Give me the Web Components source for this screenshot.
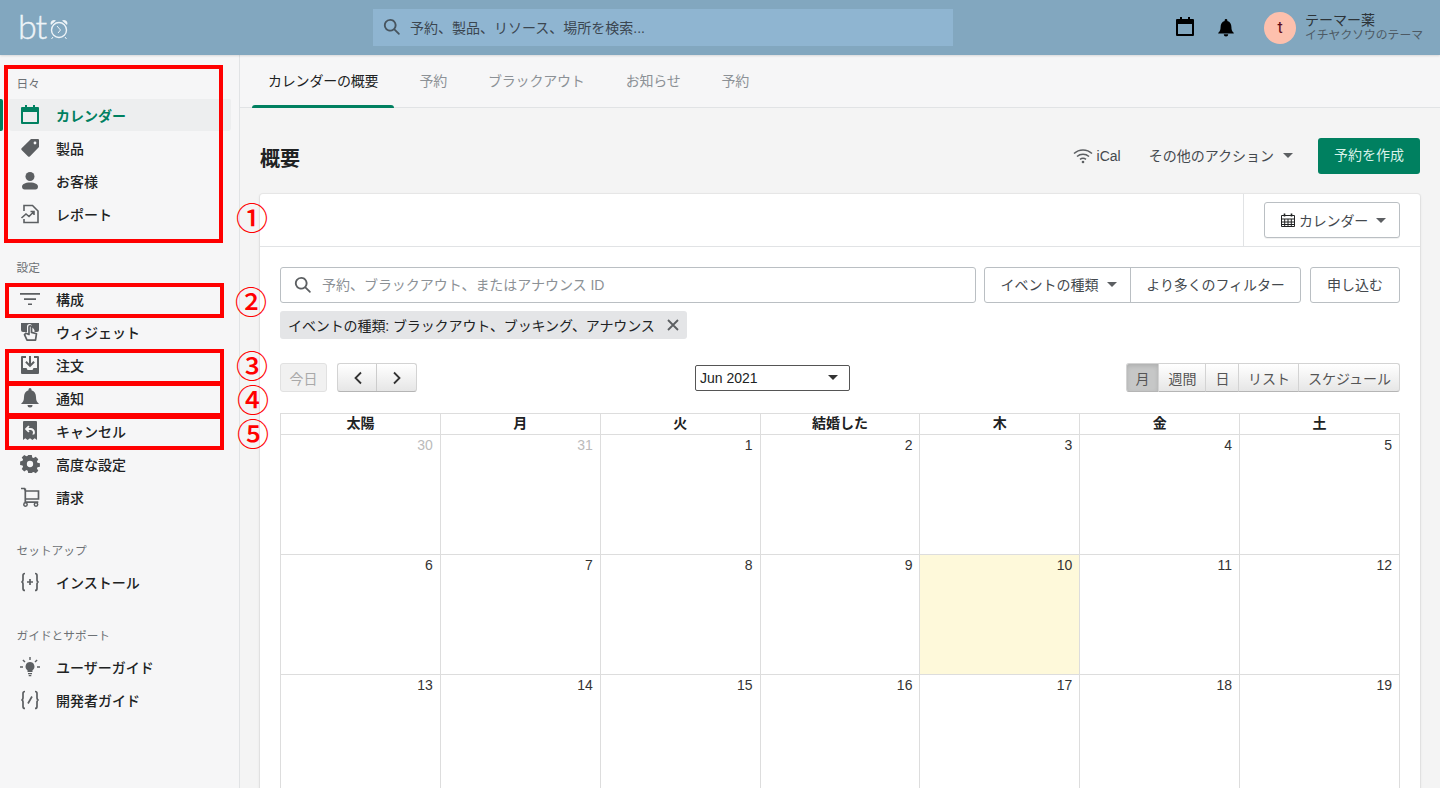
<!DOCTYPE html>
<html lang="ja">
<head>
<meta charset="utf-8">
<title>bto</title>
<style>
  html, body { margin: 0; height: 788px; overflow: hidden; background: #f4f4f4; }
  body { font: 14px "Liberation Sans", "Noto Sans CJK JP", sans-serif; color: #202223; }
</style>
</head>
<body>
<bt-app></bt-app>

<script>
const icons = {
  calendar: '<path fill-rule="evenodd" d="M5 0h2v2h6V0h2v2h3a1 1 0 0 1 1 1v15a1 1 0 0 1-1 1H2a1 1 0 0 1-1-1V3a1 1 0 0 1 1-1h3V0zM3 7v10h14V7H3z"/>',
  tag: '<path fill-rule="evenodd" d="M11 1h7a1 1 0 0 1 1 1v7L9.8 18.4a1.2 1.2 0 0 1-1.7 0L1.6 11.9a1.2 1.2 0 0 1 0-1.7L11 1zm4 2.6a1.4 1.4 0 1 0 0 2.8 1.4 1.4 0 0 0 0-2.8z"/>',
  customer: '<circle cx="10" cy="5.5" r="4.5"/><path d="M10 11.5c-5 0-8 1.7-8 4.3 0 1.6 1 2.7 2.6 2.7h10.8c1.6 0 2.6-1.1 2.6-2.7 0-2.6-3-4.3-8-4.3z"/>',
  report: '<path fill="none" stroke="currentColor" stroke-width="1.6" d="M4 7V1.500h8.500L18 7v11.500H4V15"/><path fill="none" stroke="currentColor" stroke-width="1.6" d="M1.500 14L6 10l3 2.500 4.500-4.500M10.500 7.500h3.500V11"/>',
  filter: '<path d="M0 4h20v1.700H0zM4 9.200h12v1.700H4zM8 14.400h4v1.700H8z"/>',
  widget: '<path d="M1 1h18v7a2 2 0 0 1-2 2h-2.500V8.500a4 4 0 0 0-2.500-3V4.500A2.500 2.500 0 0 0 7 4.500V10H3a2 2 0 0 1-2-2V1z"/><path fill="none" stroke="currentColor" stroke-width="1.700" stroke-linejoin="round" d="M9 5v7.500l-3-1.300-1.500 1.500 2.500 5.500h8.500l1-6.500-5-1.300V5a1.250 1.250 0 0 0-2.500 0z"/>',
  order: '<path fill-rule="evenodd" d="M1 2a1 1 0 0 1 1-1h4v2H3v10h3.500l1 2h5l1-2H17V3h-3V1h4a1 1 0 0 1 1 1v16a1 1 0 0 1-1 1H2a1 1 0 0 1-1-1V2z"/><path d="M9 1h2v7.500l2.400-2.400 1.400 1.400L10 12.300 5.200 7.500l1.400-1.400L9 8.500z"/>',
  bell: '<path d="M10 0a1.500 1.500 0 0 1 1.500 1.500v.7C14.600 3 16 5.700 16 9c0 3.500.9 5 2.500 6.200.4.300.2.800-.3.800H1.800c-.5 0-.7-.5-.3-.8C3.100 14 4 12.500 4 9c0-3.300 1.400-6 4.500-6.800v-.7A1.500 1.500 0 0 1 10 0z"/><path d="M7.500 17h5a2.500 2.500 0 0 1-5 0z"/>',
  cancel: '<path fill-rule="evenodd" d="M4 0h12a1 1 0 0 1 1 1v18l-2.300-1.700L12.400 19 10 17.300 7.600 19l-2.300-1.700L3 19V1a1 1 0 0 1 1-1zm4.300 4.500L4.800 8l3.500 3.500 1.300-1.300-1.300-1.300h2.200c1.500 0 2.500 1 2.500 2.300 0 .8-.300 1.500-.8 2.300h2c.5-.8.700-1.500.7-2.300 0-2.300-1.900-4.200-4.400-4.200H8.300l1.300-1.200-1.300-1.300z"/>',
  gear: '<path fill-rule="evenodd" d="M8 0h4l.5 2.700 1.500.7 2.400-1.500 2.800 2.800-1.500 2.400.6 1.400 2.700.6v4l-2.700.6-.6 1.400 1.500 2.400-2.800 2.800-2.400-1.500-1.500.6L12 20H8l-.5-2.600-1.500-.6-2.400 1.500L.8 15.500l1.500-2.400-.6-1.400L-1 11.100v-4l2.700-.6.600-1.400L.8 2.700l2.800-2.800L6 1.400l1.500-.7L8 0zm2 6.500a3.500 3.500 0 1 0 0 7 3.500 3.500 0 0 0 0-7z" transform="translate(1 1) scale(.9)"/>',
  cart: '<path fill="none" stroke="currentColor" stroke-width="1.700" d="M1 1.500h3.500l.8 2.500M5.300 4H18.500v8H5.300V1.500M5.300 12v3.200h13"/><circle cx="5.500" cy="17.500" r="1.700" fill="none" stroke="currentColor" stroke-width="1.500"/><circle cx="16" cy="17.500" r="1.700" fill="none" stroke="currentColor" stroke-width="1.500"/>',
  install: '<path fill="none" stroke="currentColor" stroke-width="1.700" d="M5 1.500C3.500 1.500 3 2.200 3 3.500v4.300C3 9.200 2.500 10 1.300 10 2.500 10 3 10.800 3 12.200v4.300c0 1.300.5 2 2 2M15 1.500c1.500 0 2 .7 2 2v4.300c0 1.400.5 2.200 1.700 2.200-1.200 0-1.700.8-1.700 2.200v4.300c0 1.300-.5 2-2 2M7 10h6M10 7v6"/>',
  bulb: '<path d="M10 5a4.500 4.500 0 0 1 2.500 8.200V15h-5v-1.800A4.500 4.500 0 0 1 10 5zM8 16h4v1.300H8zM8.700 18h2.600v1.300H8.700zM9.300 0h1.400v3H9.300zM0 9.300h3v1.400H0zM17 9.300h3v1.400h-3zM3.400 2.400l2.100 2.100-1 1-2.100-2.100zM16.600 2.400l1 1-2.100 2.100-1-1z"/>',
  dev: '<path fill="none" stroke="currentColor" stroke-width="1.700" d="M5 1.500C3.500 1.500 3 2.200 3 3.500v4.300C3 9.200 2.500 10 1.300 10 2.500 10 3 10.800 3 12.200v4.300c0 1.300.5 2 2 2M15 1.500c1.500 0 2 .7 2 2v4.300c0 1.400.5 2.200 1.700 2.200-1.200 0-1.700.8-1.700 2.200v4.300c0 1.300-.5 2-2 2M8 13.500l4-7"/>',
  search: '<path fill-rule="evenodd" d="M8 1a7 7 0 0 1 5.600 11.200l4.800 4.800a1 1 0 0 1-1.400 1.400l-4.800-4.800A7 7 0 1 1 8 1zm0 2a5 5 0 1 0 0 10A5 5 0 0 0 8 3z"/>'
};

function svg(name, size = 20) {
  return `<svg width="${size}" height="${size}" viewBox="0 0 20 20" fill="currentColor" aria-hidden="true">${icons[name]}</svg>`;
}

class BtNavItem extends HTMLElement {
  connectedCallback() {
    const root = this.attachShadow({ mode: 'open' });
    root.innerHTML = `
      <style>
        :host { display: block; height: 33px; position: relative; }
        .row { height: 33px; margin: 0 8px 0 9px; border-radius: 3px; display: flex; align-items: center;
               padding-left: 11px; font-weight: 500; font-size: 14px; color: #202223; }
        .ico { width: 20px; height: 20px; display: flex; align-items: center; justify-content: center; color: #5c5f62; margin-right: 16px; }
        .ico svg { width: 20px; height: 20px; overflow: visible; }
        :host([active]) .row { background: linear-gradient(transparent 1px, #edeeef 1px); color: #008060; font-weight: 700; }
        :host([active]) .ico { color: #008060; }
        :host([active])::before { content: ""; position: absolute; left: 0; top: 1px; width: 3px; height: 32px; background: #008060; border-radius: 0 2px 2px 0; }
      </style>
      <div class="row"><span class="ico">${svg(this.getAttribute('icon'))}</span><slot></slot></div>`;
  }
}

class BtNavSection extends HTMLElement {
  connectedCallback() {
    const root = this.attachShadow({ mode: 'open' });
    root.innerHTML = `
      <style>
        :host { display: block; margin-bottom: 19px; }
        .label { height: 33px; line-height: 37px; padding-left: 16.500px; font-size: 11.700px; color: #6d7175; }
      </style>
      <div class="label">${this.getAttribute('label')}</div>
      <slot></slot>`;
  }
}

class BtSidebar extends HTMLElement {
  constructor() {
    super();
    const root = this.attachShadow({ mode: 'open' });
    root.innerHTML = `
      <style>
        :host { display: block; width: 239px; border-right: 1px solid #e1e3e5; background: #f6f6f7; padding-top: 10px; box-sizing: content-box; }
      </style>
      <bt-nav-section label="日々">
        <bt-nav-item icon="calendar" active>カレンダー</bt-nav-item>
        <bt-nav-item icon="tag">製品</bt-nav-item>
        <bt-nav-item icon="customer">お客様</bt-nav-item>
        <bt-nav-item icon="report">レポート</bt-nav-item>
      </bt-nav-section>
      <bt-nav-section label="設定">
        <bt-nav-item icon="filter">構成</bt-nav-item>
        <bt-nav-item icon="widget">ウィジェット</bt-nav-item>
        <bt-nav-item icon="order">注文</bt-nav-item>
        <bt-nav-item icon="bell">通知</bt-nav-item>
        <bt-nav-item icon="cancel">キャンセル</bt-nav-item>
        <bt-nav-item icon="gear">高度な設定</bt-nav-item>
        <bt-nav-item icon="cart">請求</bt-nav-item>
      </bt-nav-section>
      <bt-nav-section label="セットアップ">
        <bt-nav-item icon="install">インストール</bt-nav-item>
      </bt-nav-section>
      <bt-nav-section label="ガイドとサポート">
        <bt-nav-item icon="bulb">ユーザーガイド</bt-nav-item>
        <bt-nav-item icon="dev">開発者ガイド</bt-nav-item>
      </bt-nav-section>`;
  }
}

class BtTopbar extends HTMLElement {
  constructor() {
    super();
    const root = this.attachShadow({ mode: 'open' });
    root.innerHTML = `
      <style>
        :host { display: flex; align-items: center; height: 55px; background: #82a7bf; position: relative; z-index: 2;
                box-shadow: 0 1px 2px rgba(0,0,0,.12); }
        .logo { width: 373px; display: flex; align-items: center; padding-left: 18px; box-sizing: border-box; color: #eef4f8; }
        .logo span { font: 300 34px/38px Lato, sans-serif; letter-spacing: -1px; margin-top: -3px; -webkit-text-stroke: .4px #eef4f8; }
        .logo svg { margin-left: 4px; margin-top: 2px; }
        .search { width: 580px; height: 37px; background: #8fb5d1; display: flex; align-items: center; padding: 0 0 2px 10px; box-sizing: border-box; color: #3b4650; font-size: 14px; }
        .search svg { width: 18px; height: 18px; margin-right: 9px; color: #47545e; }
        .tools { margin-left: 222px; display: flex; align-items: center; }
        .tools svg { display: block; color: #000; }
        .bell { margin-left: 22px; }
        .avatar { width: 32px; height: 32px; border-radius: 50%; background: #fdc0ad; color: #5c0c1c; margin-left: 29px; display: flex; align-items: center; justify-content: center; font: 16px Roboto, sans-serif; }
        .who { margin-left: 9px; white-space: nowrap; margin-top: -1px; }
        .who div { font-size: 14px; line-height: 16px; color: #2c3338; }
        .who small { display: block; font-size: 11.800px; line-height: 14px; color: #4d5a64; }
      </style>
      <div class="logo"><span>bt</span>
        <svg width="18" height="22" viewBox="0 0 18 22" fill="none" stroke="currentColor" stroke-width="1.400">
          <circle cx="9" cy="12" r="7.500"/><path d="M7 8l3.500 4-2.500 3M3 19l-1.500 2M15 19l1.500 2" stroke-width="1"/>
          <path d="M1 7a3.500 3.500 0 0 1 5-4.500zM17 7a3.500 3.500 0 0 0-5-4.500z" fill="currentColor" stroke="none"/>
        </svg>
      </div>
      <div class="search">${svg('search')}<span>予約、製品、リソース、場所を検索...</span></div>
      <div class="tools">
        <svg width="20" height="21" viewBox="0 0 20 21" fill="currentColor">${icons.calendar}</svg>
        <svg class="bell" width="18" height="20" viewBox="0 0 20 20" fill="currentColor">${icons.bell}</svg>
        <div class="avatar">t</div>
        <div class="who"><div>テーマー薬</div><small>イチヤクソウのテーマ</small></div>
      </div>`;
  }
}

class BtTabs extends HTMLElement {
  constructor() {
    super();
    const root = this.attachShadow({ mode: 'open' });
    const tabs = ['カレンダーの概要', '予約', 'ブラックアウト', 'お知らせ', '予約'];
    root.innerHTML = `
      <style>
        :host { display: flex; height: 52px; padding-left: 12px; background: #f6f6f7; border-bottom: 1px solid #e1e3e5; gap: 9px; box-sizing: content-box; }
        a { padding: 0 16px; line-height: 53px; height: 52px; color: #8c9196; font-size: 14px; letter-spacing: -.2px; box-sizing: border-box; position: relative; }
        a:first-of-type { color: #202223; }
        a:first-of-type::after { content: ""; position: absolute; left: 0; right: 0; bottom: -1px; height: 3px; background: #008060; border-radius: 3px 3px 0 0; }
      </style>
      ${tabs.map(t => `<a>${t}</a>`).join('')}`;
  }
}

class BtPageHead extends HTMLElement {
  constructor() {
    super();
    const root = this.attachShadow({ mode: 'open' });
    root.innerHTML = `
      <style>
        :host { display: flex; align-items: center; height: 36px; margin: 30px 20px 20px; color: #44494e; font-size: 14px; }
        h1 { margin: 2px auto 0 0; font-size: 20px; font-weight: 600; color: #202223; }
        .ical { display: flex; align-items: center; gap: 4px; margin-right: 28px; }
        .more { display: flex; align-items: center; margin-right: 25px; padding-bottom: 2px; }
        .caret { width: 0; height: 0; border: 5px solid transparent; border-top-color: #5c5f62; border-bottom: 0; margin-left: 9px; }
        .create { width: 102px; height: 36px; line-height: 35px; background: #008060; color: #d9f2ea; text-align: center; border-radius: 3px; }
      </style>
      <h1>概要</h1>
      <div class="ical">
        <svg width="20" height="16" viewBox="0 0 20 16" fill="none" stroke="#5c5f62" stroke-width="1.500">
          <path d="M1 5.500a13 13 0 0 1 18 0M4 8.500a9 9 0 0 1 12 0M7 11.300a5 5 0 0 1 6 0"/><circle cx="10" cy="14" r="1.300" fill="#5c5f62" stroke="none"/>
        </svg>
        <span>iCal</span>
      </div>
      <div class="more">その他のアクション<i class="caret"></i></div>
      <div class="create">予約を作成</div>`;
  }
}

class BtCardHead extends HTMLElement {
  constructor() {
    super();
    const root = this.attachShadow({ mode: 'open' });
    root.innerHTML = `
      <style>
        :host { display: flex; justify-content: flex-end; height: 52px; border-bottom: 1px solid #e1e3e5; }
        .side { width: 177px; border-left: 1px solid #e1e3e5; box-sizing: border-box; padding: 8px 20px 0 20px; }
        .btn { height: 36px; width: 136px; box-sizing: border-box; background: #fff; border: 1px solid #babfc3; border-radius: 3px; display: flex; align-items: center; padding-left: 16px; color: #44494e; font-size: 14px; box-shadow: 0 1px 0 rgba(0,0,0,.05); }
        .caret { width: 0; height: 0; border: 5px solid transparent; border-top-color: #5c5f62; border-bottom: 0; margin-left: 8px; }
        svg { margin-right: 4px; }
      </style>
      <div class="side"><div class="btn">
        <svg width="14" height="14" viewBox="0 0 14 14" fill="none" stroke="#202223" stroke-width="1">
          <path d="M.5 2.500h13v11H.5zM.5 6h13M.5 9h13M.5 11.500h13M3.700 6v7.500M7 6v7.500M10.300 6v7.500"/><path d="M3.500 .5v3M10.500 .5v3" stroke-width="1.600"/>
        </svg><span style="letter-spacing:-.2px">カレンダー</span><i class="caret"></i></div></div>`;
  }
}

class BtFilters extends HTMLElement {
  constructor() {
    super();
    const root = this.attachShadow({ mode: 'open' });
    root.innerHTML = `
      <style>
        :host { display: block; padding: 20px 20px 0; color: #44494e; font-size: 14px; }
        .row { display: flex; height: 36px; }
        .box { border: 1px solid #babfc3; border-radius: 3px; background: #fff; box-sizing: border-box; display: flex; align-items: center; justify-content: center; }
        .input { width: 696px; justify-content: flex-start; padding: 0 0 2px 13px; color: #8c9196; letter-spacing: -.03px; }
        .input svg { width: 18px; height: 18px; color: #5c5f62; margin-right: 10px; margin-top: 2px; }
        .group { width: 317px; margin-left: 8px; }
        .group span { display: flex; align-items: center; justify-content: center; height: 100%; padding-bottom: 2px; box-sizing: border-box; }
        .group span:first-child { width: 146px; padding-left: 2px; border-right: 1px solid #babfc3; }
        .group span:last-child { flex: 1; letter-spacing: -.1px; }
        .apply { width: 90px; margin-left: 9px; padding-bottom: 2px; }
        .caret { width: 0; height: 0; border: 5px solid transparent; border-top-color: #5c5f62; border-bottom: 0; margin-left: 8px; }
        .tag { display: inline-flex; align-items: center; height: 28px; margin-top: 8px; padding: 0 7px 0 8px; background: #e4e5e7; border-radius: 3px; color: #202223; letter-spacing: -.1px; }
        .tag svg { margin-left: 11px; }
      </style>
      <div class="row">
        <div class="box input">${svg('search')}<span>予約、ブラックアウト、またはアナウンス ID</span></div>
        <div class="box group"><span>イベントの種類<i class="caret"></i></span><span>より多くのフィルター</span></div>
        <div class="box apply">申し込む</div>
      </div>
      <div class="tag">イベントの種類: ブラックアウト、ブッキング、アナウンス
        <svg width="14" height="14" viewBox="0 0 14 14" stroke="#5c5f62" stroke-width="1.800" fill="none"><path d="M2 2l10 10M12 2L2 12"/></svg>
      </div>`;
  }
}

class BtCalToolbar extends HTMLElement {
  constructor() {
    super();
    const root = this.attachShadow({ mode: 'open' });
    const views = [['月', 33], ['週間', 47], ['日', 33], ['リスト', 60], ['スケジュール', 101]];
    root.innerHTML = `
      <style>
        :host { display: flex; align-items: center; height: 29px; margin: 24px 20px 21px; font-size: 14px; color: #333; position: relative; }
        .fc { height: 29px; box-sizing: border-box; display: flex; align-items: center; justify-content: center;
              background: linear-gradient(#fff, #e6e6e6); border: 1px solid #d3d3d3; border-bottom-color: #b5b5b5; }
        .today { width: 47px; border-radius: 3px; color: #a9a9a9; background: #f1f1f1; border-color: #e1e1e1; }
        .nav { width: 40px; margin-left: 0; }
        .nav svg { display: block; }
        .prev { margin-left: 10px; border-radius: 3px 0 0 3px; border-right: 0; box-shadow: inset -1px 0 0 #ccc; }
        .next { border-left: 0; border-radius: 0 3px 3px 0; }
        .month { width: 155px; height: 26px; margin-left: 278px; background: #fff; border: 1px solid #555; border-radius: 2px; box-sizing: border-box; display: flex; align-items: center; justify-content: space-between; padding: 0 11px 0 4px; color: #202223; font-size: 14px; }
        .month i { width: 0; height: 0; border: 5px solid transparent; border-top-color: #333; border-bottom: 0; }
        .views { margin-left: auto; display: flex; }
        .views .fc { border-left: 0; color: #555; padding-left: 1px; }
        .views .fc:first-child { border-left: 1px solid #d3d3d3; padding-left: 0; border-radius: 3px 0 0 3px; background: #c6c7c7; box-shadow: inset 0 2px 4px rgba(0,0,0,.12); }
        .views .fc:last-child { border-radius: 0 3px 3px 0; }
      </style>
      <div class="fc today">今日</div>
      <div class="fc nav prev"><svg width="12" height="14" viewBox="0 0 12 14" fill="none" stroke="#333" stroke-width="1.800"><path d="M9 1.500L3.500 7 9 12.500"/></svg></div>
      <div class="fc nav next"><svg width="12" height="14" viewBox="0 0 12 14" fill="none" stroke="#333" stroke-width="1.800"><path d="M3 1.500L8.500 7 3 12.500"/></svg></div>
      <div class="month">Jun 2021<i></i></div>
      <div class="views">${views.map(v => `<div class="fc" style="width:${v[1]}px">${v[0]}</div>`).join('')}</div>`;
  }
}

class BtMonth extends HTMLElement {
  constructor() {
    super();
    const root = this.attachShadow({ mode: 'open' });
    const head = ['太陽', '月', '火', '結婚した', '木', '金', '土'];
    const days = [30, 31, 1, 2, 3, 4, 5, 6, 7, 8, 9, 10, 11, 12, 13, 14, 15, 16, 17, 18, 19];
    root.innerHTML = `
      <style>
        :host { display: block; margin: 0 20px; font-size: 14px; color: #333; }
        .grid { display: grid; grid-template-columns: repeat(7, 1fr); border-top: 1px solid #ddd; border-left: 1px solid #ddd; }
        .h, .d { border-right: 1px solid #ddd; border-bottom: 1px solid #ddd; box-sizing: border-box; }
        .h { height: 21px; line-height: 19px; text-align: center; font-weight: 600; color: #202223; }
        .d { height: 120px; text-align: right; padding: 2px 7px 2px 6px; line-height: 17px; }
        .old { color: #bbb; }
        .today { background: #fef9da; }
      </style>
      <div class="grid">
        ${head.map(h => `<div class="h">${h}</div>`).join('')}
        ${days.map((d, i) => `<div class="d${i < 2 ? ' old' : ''}${d === 10 ? ' today' : ''}">${d}</div>`).join('')}
      </div>`;
  }
}

class BtCard extends HTMLElement {
  constructor() {
    super();
    const root = this.attachShadow({ mode: 'open' });
    root.innerHTML = `
      <style>
        :host { display: block; margin: 0 20px; background: #fff; border-radius: 3px 3px 0 0; box-shadow: 0 0 0 1px rgba(63,63,68,.05), 0 1px 3px rgba(63,63,68,.15); }
      </style>
      <slot></slot>`;
  }
}

// red marks drawn over the screenshot: they sit on top of the page, not in its flow
class BtMarks extends HTMLElement {
  constructor() {
    super();
    const root = this.attachShadow({ mode: 'open' });
    const boxes = [[4, 65, 219, 178], [5, 283, 219, 35], [5, 349, 219, 36], [5, 382, 219, 35], [5, 415, 219, 35]];
    const nums = [['①', 252, 216], ['②', 251, 300], ['③', 252, 364], ['④', 253, 398], ['⑤', 253, 432]];
    root.innerHTML = `
      <style>
        :host { position: absolute; left: 0; top: 0; z-index: 3; }
        .b { position: absolute; border: 4px solid #f00; box-sizing: border-box; }
        .n { position: absolute; color: #f00; font: 500 32px/32px "Noto Sans CJK JP", sans-serif; transform: translate(-50%, -50%); white-space: nowrap; }
      </style>
      ${boxes.map(b => `<div class="b" style="left:${b[0]}px;top:${b[1]}px;width:${b[2]}px;height:${b[3]}px"></div>`).join('')}
      ${nums.map(n => `<div class="n" style="left:${n[1]}px;top:${n[2]}px">${n[0]}</div>`).join('')}`;
  }
}

class BtApp extends HTMLElement {
  constructor() {
    super();
    const root = this.attachShadow({ mode: 'open' });
    root.innerHTML = `
      <style>
        :host { display: block; height: 788px; overflow: hidden; position: relative; }
        .body { display: flex; height: 733px; }
        bt-sidebar { flex: none; }
        main { flex: 1; min-width: 0; background: #f4f4f4; }
      </style>
      <bt-topbar></bt-topbar>
      <div class="body">
        <bt-sidebar></bt-sidebar>
        <main>
          <bt-tabs></bt-tabs>
          <bt-page-head></bt-page-head>
          <bt-card>
            <bt-card-head></bt-card-head>
            <bt-filters></bt-filters>
            <bt-cal-toolbar></bt-cal-toolbar>
            <bt-month></bt-month>
          </bt-card>
        </main>
      </div>
      <bt-marks></bt-marks>`;
  }
}

customElements.define('bt-nav-item', BtNavItem);
customElements.define('bt-nav-section', BtNavSection);
customElements.define('bt-sidebar', BtSidebar);
customElements.define('bt-topbar', BtTopbar);
customElements.define('bt-tabs', BtTabs);
customElements.define('bt-page-head', BtPageHead);
customElements.define('bt-card-head', BtCardHead);
customElements.define('bt-filters', BtFilters);
customElements.define('bt-cal-toolbar', BtCalToolbar);
customElements.define('bt-month', BtMonth);
customElements.define('bt-card', BtCard);
customElements.define('bt-marks', BtMarks);
customElements.define('bt-app', BtApp);
</script>
</body>
</html>
